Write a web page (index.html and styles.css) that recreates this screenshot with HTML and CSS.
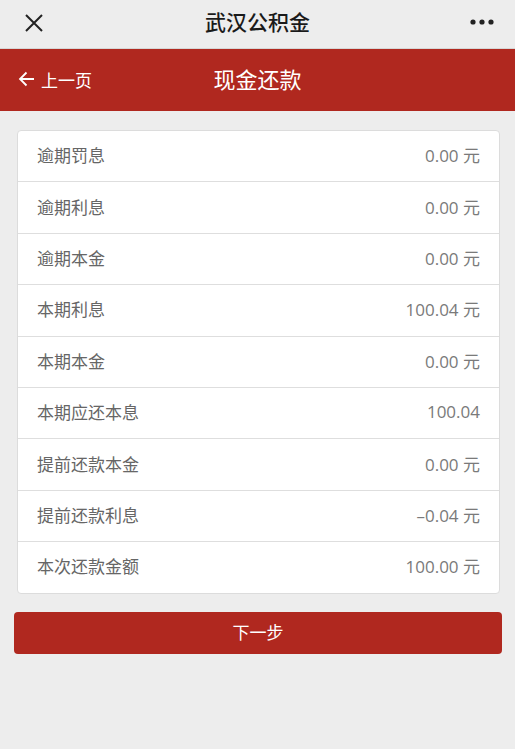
FILE: index.html
```html
<!DOCTYPE html>
<html lang="zh-CN">
<head>
<meta charset="utf-8">
<title>现金还款</title>
<link rel="stylesheet" href="styles.css">
</head>
<body>
<div class="topbar">
  <svg class="close" width="20" height="20" viewBox="0 0 20 20"><path d="M2 2 L18 18 M18 2 L2 18" stroke="#222" stroke-width="2" fill="none"/></svg>
  <div class="app-title">武汉公积金</div>
  <svg class="more" width="26" height="6" viewBox="0 0 26 6"><circle cx="4" cy="3" r="2.6" fill="#222"/><circle cx="13" cy="3" r="2.6" fill="#222"/><circle cx="22" cy="3" r="2.6" fill="#222"/></svg>
</div>
<div class="header">
  <div class="back">
    <svg width="17" height="16" viewBox="0 0 17 16"><path d="M16 8 H2 M8.5 1.5 L2 8 L8.5 14.5" stroke="#fff" stroke-width="1.8" fill="none"/></svg>
    <span>上一页</span>
  </div>
  <div class="page-title">现金还款</div>
</div>
<main class="content">
  <div class="card">
    <div class="row"><span class="label">逾期罚息</span><span class="value">0.00 元</span></div>
    <div class="row"><span class="label">逾期利息</span><span class="value">0.00 元</span></div>
    <div class="row"><span class="label">逾期本金</span><span class="value">0.00 元</span></div>
    <div class="row"><span class="label">本期利息</span><span class="value">100.04 元</span></div>
    <div class="row"><span class="label">本期本金</span><span class="value">0.00 元</span></div>
    <div class="row"><span class="label">本期应还本息</span><span class="value">100.04</span></div>
    <div class="row"><span class="label">提前还款本金</span><span class="value">0.00 元</span></div>
    <div class="row"><span class="label">提前还款利息</span><span class="value">–0.04 元</span></div>
    <div class="row"><span class="label">本次还款金额</span><span class="value">100.00 元</span></div>
  </div>
  <button class="next">下一步</button>
</main>
</body>
</html>
```
FILE: styles.css
```css
html, body {
  margin: 0;
  padding: 0;
  background: #ededed;
  font-family: "Noto Sans", "Noto Sans CJK SC", sans-serif;
}
.topbar {
  height: 48px;
  border-bottom: 1px solid #d6d6d6;
  display: flex;
  align-items: center;
  justify-content: space-between;
  padding: 0 20px 0 24px;
  position: relative;
}
.close { display: block; margin-top: -3px; }
.more { display: block; margin-top: -5px; }
.app-title {
  position: absolute;
  left: 0;
  right: 0;
  top: 6px;
  text-align: center;
  font-size: 21px;
  font-weight: 500;
  color: #1a1a1a;
  font-family: "Noto Sans CJK SC", sans-serif;
  pointer-events: none;
}
.header {
  height: 62px;
  background: #b0281f;
  display: flex;
  align-items: center;
  position: relative;
  color: #fff;
}
.back {
  display: flex;
  align-items: center;
  gap: 6px;
  padding-left: 18px;
  font-size: 17px;
  font-family: "Noto Sans CJK SC", sans-serif;
  margin-top: -2px;
}
.back svg { display: block; }
.page-title {
  position: absolute;
  left: 0;
  right: 0;
  top: 13px;
  text-align: center;
  font-size: 22px;
  font-family: "Noto Sans CJK SC", sans-serif;
  pointer-events: none;
}
.content {
  padding: 19px 13px 0 14px;
}
.card {
  margin: 0 2px 0 3px;
  background: #fff;
  border: 1px solid #dcdcdc;
  border-radius: 4px;
}
.row {
  height: 51.4px;
  box-sizing: border-box;
  display: flex;
  align-items: center;
  justify-content: space-between;
  padding: 0 19px 3px 19px;
  border-bottom: 1px solid #dedede;
}
.row:last-child { border-bottom: none; height: 50.4px; }
.label {
  color: #666;
  font-size: 17px;
  font-family: "Noto Sans CJK SC", sans-serif;
}
.value {
  color: #7a7a7a;
  font-family: "Open Sans", "Noto Sans CJK SC", sans-serif;
  font-size: 17px;
}
.next {
  display: block;
  width: 100%;
  height: 42px;
  margin-top: 18px;
  border: none;
  border-radius: 4px;
  background: #b0281f;
  color: #fff;
  font-size: 17px;
  font-family: "Noto Sans CJK SC", sans-serif;
  padding: 0 0 2px;
}
```
